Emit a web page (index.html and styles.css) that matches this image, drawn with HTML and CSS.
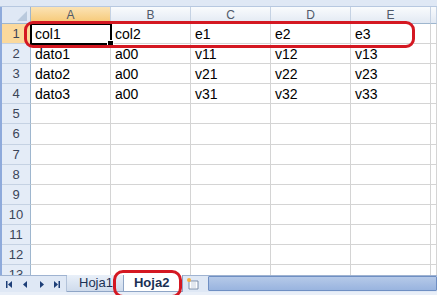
FILE: index.html
```html
<!DOCTYPE html>
<html lang="es">
<head>
<meta charset="UTF-8">
<title>Hoja2</title>
<link rel="stylesheet" href="styles.css">
</head>
<body>
<div class="app">
    <div class="topstrip"></div>

    <div class="sheet">
        <div class="corner"><span class="tri"></span></div>
        <div class="colhead sel">A</div>
        <div class="colhead">B</div>
        <div class="colhead">C</div>
        <div class="colhead">D</div>
        <div class="colhead">E</div>
        <div class="colhead"></div>

        <div class="rowhead sel">1</div>
        <div class="cell active">col1<span class="handle"></span></div>
        <div class="cell">col2</div><div class="cell">e1</div><div class="cell">e2</div><div class="cell">e3</div><div class="cell"></div>

        <div class="rowhead">2</div>
        <div class="cell">dato1</div><div class="cell">a00</div><div class="cell">v11</div><div class="cell">v12</div><div class="cell">v13</div><div class="cell"></div>

        <div class="rowhead">3</div>
        <div class="cell">dato2</div><div class="cell">a00</div><div class="cell">v21</div><div class="cell">v22</div><div class="cell">v23</div><div class="cell"></div>

        <div class="rowhead">4</div>
        <div class="cell">dato3</div><div class="cell">a00</div><div class="cell">v31</div><div class="cell">v32</div><div class="cell">v33</div><div class="cell"></div>

        <div class="rowhead">5</div><div class="cell"></div><div class="cell"></div><div class="cell"></div><div class="cell"></div><div class="cell"></div><div class="cell"></div>
        <div class="rowhead">6</div><div class="cell"></div><div class="cell"></div><div class="cell"></div><div class="cell"></div><div class="cell"></div><div class="cell"></div>
        <div class="rowhead">7</div><div class="cell"></div><div class="cell"></div><div class="cell"></div><div class="cell"></div><div class="cell"></div><div class="cell"></div>
        <div class="rowhead">8</div><div class="cell"></div><div class="cell"></div><div class="cell"></div><div class="cell"></div><div class="cell"></div><div class="cell"></div>
        <div class="rowhead">9</div><div class="cell"></div><div class="cell"></div><div class="cell"></div><div class="cell"></div><div class="cell"></div><div class="cell"></div>
        <div class="rowhead">10</div><div class="cell"></div><div class="cell"></div><div class="cell"></div><div class="cell"></div><div class="cell"></div><div class="cell"></div>
        <div class="rowhead">11</div><div class="cell"></div><div class="cell"></div><div class="cell"></div><div class="cell"></div><div class="cell"></div><div class="cell"></div>
        <div class="rowhead">12</div><div class="cell"></div><div class="cell"></div><div class="cell"></div><div class="cell"></div><div class="cell"></div><div class="cell"></div>
        <div class="rowhead">13</div><div class="cell"></div><div class="cell"></div><div class="cell"></div><div class="cell"></div><div class="cell"></div><div class="cell"></div>

        <div class="mark row-mark"></div>
    </div>

    <div class="tabbar">
        <div class="navs">
            <svg width="66" height="17" viewBox="0 0 66 17">
                <g fill="#1e3f78">
                    <rect x="6" y="5" width="1.5" height="7"/>
                    <polygon points="8,8.5 12,5 12,12"/>
                    <polygon points="23,8.5 27,5 27,12"/>
                    <polygon points="40,5 44,8.5 40,12"/>
                    <polygon points="54,5 58,8.5 54,12"/>
                    <rect x="58.5" y="5" width="1.5" height="7"/>
                </g>
            </svg>
        </div>
        <div class="tab">Hoja1</div>
        <div class="tab current">Hoja2</div>
        <div class="newsheet">
            <svg width="18" height="17" viewBox="0 0 18 17">
                <path d="M4 5h9v8H4z" fill="#fff" stroke="#7a8da8"/>
                <path d="M6 7h5M6 9h5M6 11h5" stroke="#c6d0de"/>
                <circle cx="4" cy="4" r="2" fill="#f5b041"/>
            </svg>
        </div>
        <div class="scroll"></div>
        <div class="mark tab-mark"></div>
    </div>
    <div class="bottomstrip"></div>
</div>
</body>
</html>
```

FILE: styles.css
```css
body {
    margin: 0;
    padding: 0;
    font-family: "Liberation Sans", Arial, sans-serif;
    background: #fff;
    overflow: hidden;
}
.app {
    width: 437px;
    height: 295px;
    display: flex;
    flex-direction: column;
    overflow: hidden;
}
.topstrip {
    height: 7px;
    background: #dfe8f5;
    border-bottom: 1px solid #b7c8e0;
    box-sizing: border-box;
}
.sheet {
    position: relative;
    height: 268px;
    overflow: hidden;
    display: grid;
    grid-template-columns: 29px repeat(5, 80px) 1fr;
    grid-template-rows: 17px;
    grid-auto-rows: 20.1px;
    border-left: 2px solid #8eaadb;
    box-sizing: border-box;
}
.corner {
    position: relative;
    background: #dfe8f5;
    border-right: 1px solid #9eb6ce;
    border-bottom: 1px solid #9eb6ce;
}
.tri {
    position: absolute;
    right: 3px;
    bottom: 2px;
    width: 0;
    height: 0;
    border-left: 10px solid transparent;
    border-bottom: 10px solid #b9c9dd;
}
.colhead {
    background: linear-gradient(#f9fbfd, #e2e9f3);
    border-right: 1px solid #c5d2e3;
    border-bottom: 1px solid #9eb6ce;
    color: #50596a;
    font-size: 12px;
    line-height: 17px;
    text-align: center;
}
.colhead.sel {
    background: linear-gradient(#fbe3b5, #f6c874);
    border-bottom-color: #e8a94c;
}
.rowhead {
    background: #e4ecf7;
    border-right: 1px solid #9eb6ce;
    border-bottom: 1px solid #c5d2e3;
    color: #3b4558;
    font-size: 13px;
    line-height: 20px;
    text-align: center;
    margin-left: -2px;
    padding-left: 2px;
}
.rowhead.sel {
    background: #fbd99c;
    border-right-color: #e8a94c;
}
.cell {
    position: relative;
    border-right: 1px solid #d4d4d4;
    border-bottom: 1px solid #d4d4d4;
    font-size: 14px;
    line-height: 20px;
    padding-left: 4px;
    color: #000;
    white-space: nowrap;
}
.cell.active {
    outline: 2px solid #000;
    outline-offset: -1px;
    z-index: 1;
}
.handle {
    position: absolute;
    right: -4px;
    bottom: -4px;
    width: 5px;
    height: 5px;
    background: #000;
    border: 1px solid #fff;
}
.mark {
    position: absolute;
    border: 3px solid #d41822;
    z-index: 2;
}
.row-mark {
    left: 22px;
    top: 14px;
    width: 385px;
    height: 21px;
    border-radius: 9px;
}
.tabbar {
    position: relative;
    display: flex;
    align-items: stretch;
    background: #dfe8f5;
    border-top: 1px solid #9fb3d1;
    box-sizing: border-box;
    height: 17px;
}
.navs {
    width: 66px;
    border-right: 1px solid #b3c3da;
}
.tab {
    font-size: 13px;
    line-height: 15px;
    color: #1b3154;
    padding: 0 10px 0 12px;
    background: linear-gradient(#e9f0f9, #cfdbec);
    border-right: 1px solid #8ea5c6;
    border-bottom: 1px solid #8ea5c6;
    margin-top: -1px;
}
.tab.current {
    background: #fff;
    font-weight: bold;
    padding: 0 13px 0 10px;
}
.newsheet {
    width: 22px;
    display: flex;
    align-items: center;
    justify-content: center;
}
.scroll {
    flex: 1;
    margin: 0 0 1px 3px;
    background: linear-gradient(#b5c9e8, #99b4df);
    border: 1px solid #6f8fc3;
    border-radius: 1px;
}
.tab-mark {
    left: 113px;
    top: -6px;
    width: 63px;
    height: 22px;
    border-radius: 10px;
}
.bottomstrip {
    height: 3px;
    background: #e9eff8;
}
```
